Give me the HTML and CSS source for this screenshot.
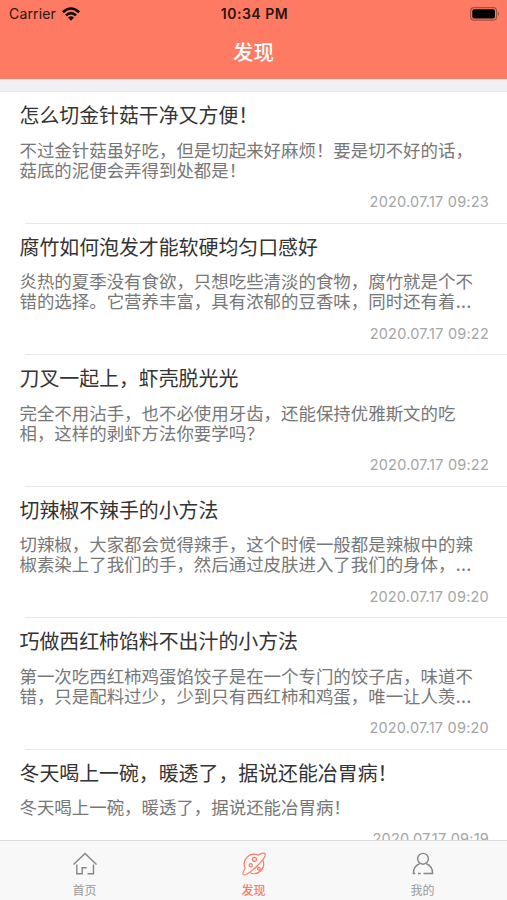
FILE: index.html
```html
<!DOCTYPE html>
<html lang="zh-CN">
<head>
    <meta charset="UTF-8">
    <meta name="viewport" content="width=device-width, initial-scale=1.0">
    <title>发现</title>
    <link rel="stylesheet" href="styles.css">
</head>
<body>
    <header class="header">
        <div class="status-bar">
            <div class="carrier">
                <span>Carrier</span>
                <svg class="wifi" viewBox="0 0 18 14">
                    <path d="M0 4.3 Q9 -4 18 4.3 L16.2 6.2 Q9 -.6 1.8 6.2Z"/>
                    <path d="M3 7.4 Q9 1.9 15 7.4 L13.2 9.3 Q9 5.5 4.8 9.3Z"/>
                    <path d="M6 10.5 Q9 8 12 10.5 L9 13.7Z"/>
                </svg>
            </div>
            <span class="time">10:34 PM</span>
            <svg class="battery" viewBox="0 0 30 14">
                <rect class="battery-case" x=".6" y=".6" width="26" height="12.6" rx="3.5"/>
                <rect x="2.3" y="2.3" width="22.6" height="9.2" rx="1.8"/>
                <path class="battery-tip" d="M28 4.8 Q30.4 7 28 9Z"/>
            </svg>
        </div>
        <h1>发现</h1>
    </header>

    <main class="list">
        <article class="item">
            <h2>怎么切金针菇干净又方便！</h2>
            <p>不过金针菇虽好吃，但是切起来好麻烦！要是切不好的话，<br>菇底的泥便会弄得到处都是！</p>
            <time>2020.07.17 09:23</time>
        </article>
        <article class="item">
            <h2>腐竹如何泡发才能软硬均匀口感好</h2>
            <p>炎热的夏季没有食欲，只想吃些清淡的食物，腐竹就是个不<br>错的选择。它营养丰富，具有浓郁的豆香味，同时还有着<span class="more">…</span></p>
            <time>2020.07.17 09:22</time>
        </article>
        <article class="item">
            <h2>刀叉一起上，虾壳脱光光</h2>
            <p>完全不用沾手，也不必使用牙齿，还能保持优雅斯文的吃<br>相，这样的剥虾方法你要学吗？</p>
            <time>2020.07.17 09:22</time>
        </article>
        <article class="item">
            <h2>切辣椒不辣手的小方法</h2>
            <p>切辣椒，大家都会觉得辣手，这个时候一般都是辣椒中的辣<br>椒素染上了我们的手，然后通过皮肤进入了我们的身体，<span class="more">…</span></p>
            <time>2020.07.17 09:20</time>
        </article>
        <article class="item">
            <h2>巧做西红柿馅料不出汁的小方法</h2>
            <p>第一次吃西红柿鸡蛋馅饺子是在一个专门的饺子店，味道不<br>错，只是配料过少，少到只有西红柿和鸡蛋，唯一让人羡<span class="more">…</span></p>
            <time>2020.07.17 09:20</time>
        </article>
        <article class="item short">
            <h2>冬天喝上一碗，暖透了，据说还能冶胃病！</h2>
            <p>冬天喝上一碗，暖透了，据说还能冶胃病！</p>
            <time>2020.07.17 09:19</time>
        </article>
    </main>

    <nav class="tabbar">
        <a class="tab" href="#">
            <svg viewBox="0 0 26 26">
                <path d="M1.5 13.5 L13 2.5 L24.5 13.5"/>
                <path d="M4.8 13.5 V22.8 H10.2 V16.8 H14.7"/>
                <path d="M21.5 13.5 V22.8 H15.5"/>
            </svg>
            <span>首页</span>
        </a>
        <a class="tab active" href="#">
            <svg viewBox="-.8 -.8 27.6 27.6">
                <path d="M17.5 3.7 A10.3 10.3 0 0 0 3.7 17.5 M22.3 8.7 A10.3 10.3 0 0 1 8.7 22.3"/>
                <path d="M17.5 3.7 C21 1.3 24.2 .9 24.7 2 C26 5 20.5 11.2 15.8 15.6 C10.5 20.5 3.4 26 1.6 24.3 C.5 23.2 1.6 20.6 3.7 17.5"/>
                <circle cx="13.5" cy="8" r="2.1"/>
                <circle cx="9.5" cy="14.3" r="1.7"/>
                <circle cx="18.2" cy="18" r="1.4"/>
            </svg>
            <span>发现</span>
        </a>
        <a class="tab" href="#">
            <svg viewBox="0 0 26 26">
                <circle cx="13" cy="7.8" r="5.4"/>
                <path d="M9.8 12.7 C5.5 14.3 3.4 18 3.4 22.5 H5.2 M16.2 12.7 C20.5 14.3 22.6 18 22.6 22.5 H13.5 M8 22.5 H10.7"/>
            </svg>
            <span>我的</span>
        </a>
    </nav>
</body>
</html>
```

FILE: styles.css
```css
* {
    margin: 0;
    padding: 0;
    box-sizing: border-box;
}

body {
    display: flex;
    flex-direction: column;
    height: 100vh;
    overflow: hidden;
    font-family: Inter, "Noto Sans CJK SC", sans-serif;
    background-color: #efeff4;
}

/* Header */
.header {
    flex: none;
    height: 79px;
    background-color: #ff7a62;
}

.status-bar {
    display: grid;
    grid-template-columns: 1fr auto 1fr;
    align-items: center;
    height: 27px;
    padding: 0 7px 0 9px;
    font-size: 14px;
    color: #2b1411;
}

.carrier {
    display: flex;
    align-items: center;
    gap: 6px;
    letter-spacing: 0.15px;
}

.wifi {
    width: 18px;
    height: 14px;
    fill: #120806;
}

.time {
    font-weight: 600;
    font-size: 14px;
    letter-spacing: 0.5px;
}

.battery {
    justify-self: end;
    width: 30px;
    height: 14px;
}

.battery-case {
    fill: none;
    stroke: #a4503f;
    stroke-width: 1.2;
}

.battery-tip {
    fill: #a4503f;
}

.header h1 {
    font-size: 20.5px;
    font-weight: 500;
    line-height: 51px;
    text-align: center;
    color: #fff;
}

/* List */
.list {
    flex: 1;
    min-height: 0;
    margin-top: 12px;
    overflow: hidden;
    background-color: #fff;
    border-top: 1px solid #e6e7e9;
}

.item {
    display: flex;
    flex-direction: column;
    height: 131.5px;
    padding: 9px 18px 0 19.5px;
    white-space: nowrap;
    background: linear-gradient(#e8e8e8, #e8e8e8) no-repeat 25px 100% / 100% 1px;
}

.item h2 {
    font-size: 19.9px;
    font-weight: 400;
    line-height: 30px;
    color: #333;
}

.item p {
    height: 41px;
    margin-top: 9.5px;
    font-size: 17.45px;
    line-height: 20.4px;
    color: #777;
}

.more {
    letter-spacing: 1px;
    font-size: 18.5px;
    line-height: 1;
}

.item time {
    margin-top: 10.5px;
    font-size: 14.5px;
    line-height: 20px;
    letter-spacing: 0.22px;
    text-align: right;
    color: #a5a5a5;
}

.item.short p {
    height: 20.5px;
}

/* Bottom tabs */
.tabbar {
    flex: none;
    display: flex;
    height: 60px;
    background-color: #f8f8f8;
    border-top: 1px solid #dcdcdc;
}

.tab {
    flex: 1;
    display: flex;
    flex-direction: column;
    align-items: center;
    padding-top: 10px;
    font-size: 12px;
    line-height: 18px;
    color: #999;
    text-decoration: none;
}

.tab svg {
    width: 26px;
    height: 26px;
    margin-bottom: 5px;
    fill: none;
    stroke: #858585;
    stroke-width: 1.4;
}

.tab.active {
    font-weight: 500;
    color: #ff7a62;
}

.tab.active svg {
    stroke: #ff7a62;
    stroke-width: 1.3;
}
```
